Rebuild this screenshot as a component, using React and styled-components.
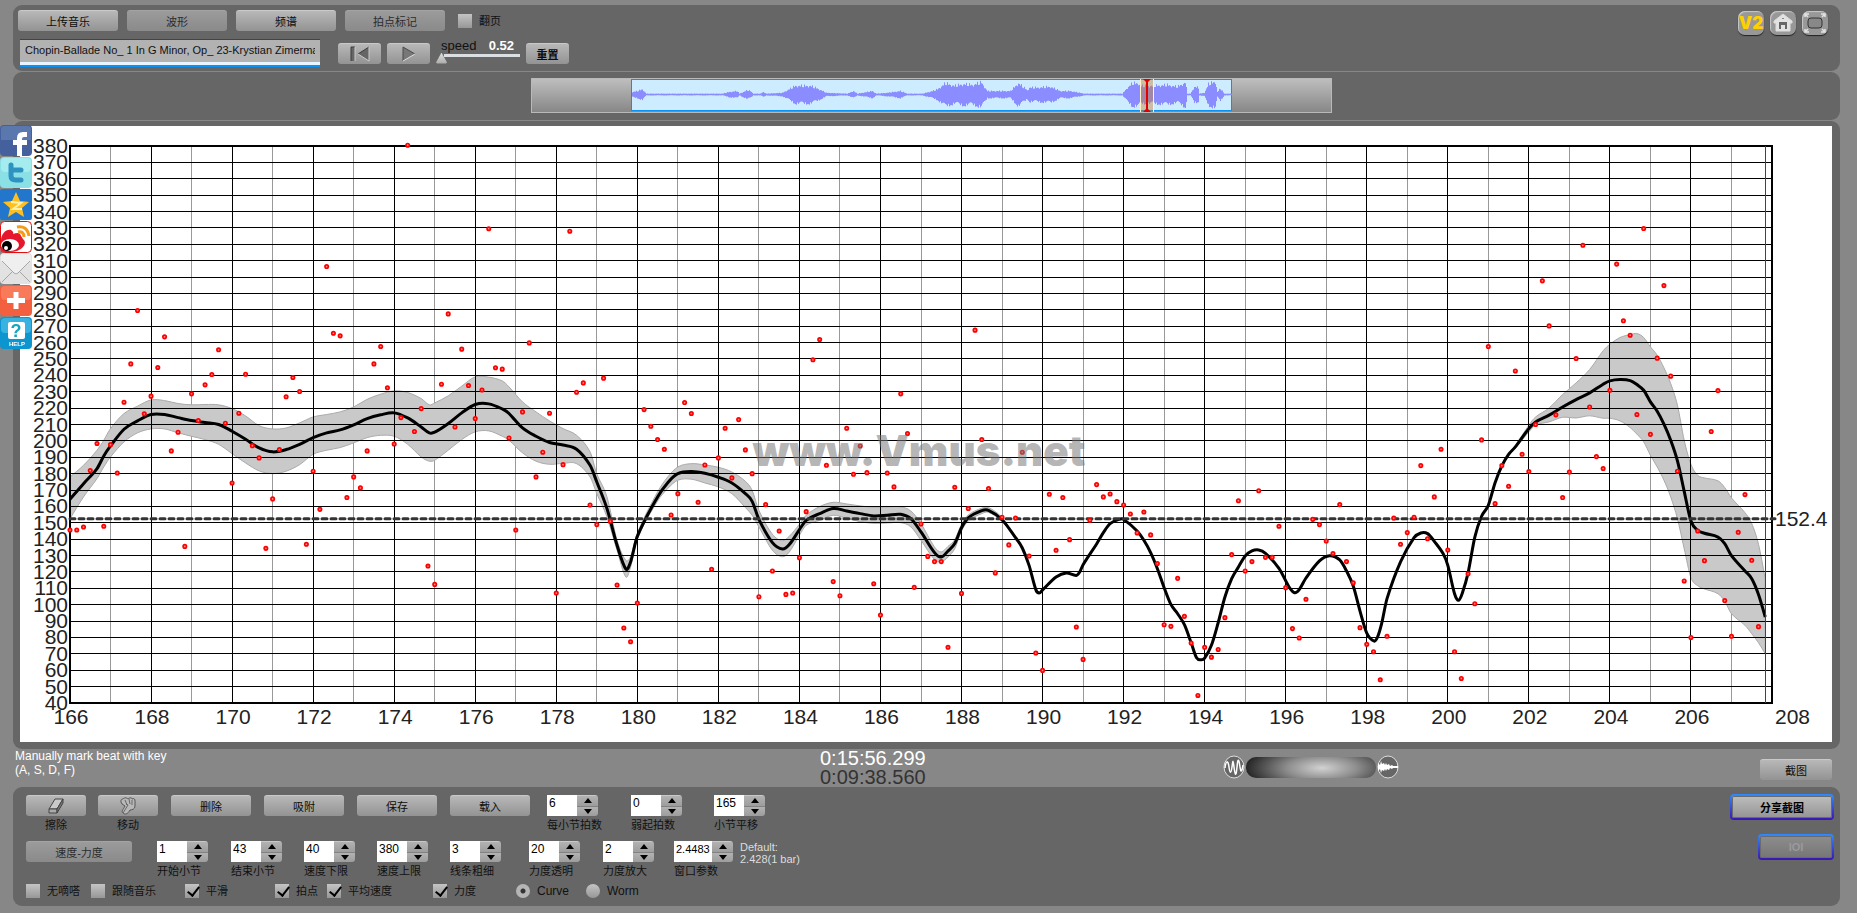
import React from "react";
import styled, { createGlobalStyle } from "styled-components";

const GlobalStyle = createGlobalStyle`
  * {
    box-sizing: border-box;
  }

  body {
    margin: 0;
    background-color: #878787;
    font-family: "Liberation Sans", "Noto Sans CJK SC", sans-serif;
    font-size: 12px;
    color: #111;
  }
`;

const Page = styled.main`
  display: flex;
  flex-direction: column;
  min-height: 100vh;
  padding: 5px 17px 7px 13px;
`;

const Panel = styled.section`
  background-color: #666;
  border-radius: 9px;
  margin-bottom: 1px;
`;

const ToolbarPanel = styled(Panel)`
  display: flex;
  justify-content: space-between;
  height: 66px;
  padding: 5px 11px 4px 5px;
`;

const ToolbarRows = styled.div`
  display: flex;
  flex-direction: column;
  gap: 8px;
`;

const ToolbarRow = styled.div`
  display: flex;
  align-items: center;
  gap: ${(props) => props.$gap}px;
`;

const Button = styled.button`
  display: flex;
  align-items: center;
  justify-content: center;
  flex-shrink: 0;
  width: ${(props) => props.$width}px;
  height: 21px;
  padding: 0;
  border: none;
  border-top: 1px solid ${(props) => (props.$dim ? "#a3a3a3" : "#c9c9c9")};
  border-radius: 3px;
  background: ${(props) =>
    props.$dim
      ? "linear-gradient(#9b9b9b, #8a8a8a)"
      : "linear-gradient(#b8b8b8, #939393)"};
  color: ${(props) => (props.$dim ? "#2c2c2c" : "#0c0c0c")};
  font-family: inherit;
  font-size: 11px;
  font-weight: ${(props) => (props.$bold ? "bold" : "normal")};
  cursor: pointer;
`;

const FramedButton = styled(Button)`
  height: 26px;
  border: 2px solid transparent;
  border-radius: 4px;
  background: ${(props) =>
      props.$dim
        ? "linear-gradient(#8d8d8d, #767676)"
        : "linear-gradient(#bdbdbd, #949494)"}
      padding-box,
    linear-gradient(#2f8cff, #3c14b4) border-box;
  color: ${(props) => (props.$dim ? "#9a9a9a" : "#000")};
  box-shadow: inset 0 0 0 1px #6b6b6b;
`;

const CheckLabel = styled.label`
  display: flex;
  align-items: center;
  gap: 7px;
  width: ${(props) => (props.$width ? props.$width + "px" : "auto")};
  margin-left: ${(props) => props.$indent || 0}px;
  font-size: ${(props) => (props.$latin ? 12 : 11)}px;
  line-height: 14px;
  white-space: nowrap;
`;

const Checkbox = styled.input`
  appearance: none;
  position: relative;
  flex-shrink: 0;
  width: 14px;
  height: 14px;
  margin: 0;
  background: linear-gradient(#c4c4c4, #979797);

  &:checked::after {
    content: "";
    position: absolute;
    left: 5px;
    top: 0;
    width: 5px;
    height: 10px;
    border: solid #000;
    border-width: 0 2px 2px 0;
    transform: rotate(38deg);
  }
`;

const Radio = styled.input`
  appearance: none;
  flex-shrink: 0;
  width: 14px;
  height: 14px;
  margin: 0;
  border-radius: 50%;
  background: linear-gradient(#c4c4c4, #979797);

  &:checked {
    background: radial-gradient(#333 0 2px, #b5b5b5 3px);
  }
`;

const FileName = styled.input`
  width: 300px;
  height: 28px;
  margin: 0 12px 0 2px;
  padding: 0 5px 6px;
  border: none;
  border-top: 1px solid #444;
  border-bottom: 2px solid #0a91f5;
  background: linear-gradient(#b2b2b2 0 22px, #e8f5ff 22px);
  color: #111;
  font-family: inherit;
  font-size: 11px;
`;

const Speed = styled.div`
  display: flex;
  flex-direction: column;
  justify-content: flex-start;
  width: 86px;
  height: 28px;
  margin: 0 -2px 0 0;
`;

const SpeedLabel = styled.label`
  display: flex;
  justify-content: space-between;
  padding: 0 8px 0 5px;
  font-size: 13px;
  line-height: 13px;

  output {
    color: #fff;
    font-weight: bold;
  }
`;

const SpeedSlider = styled.input`
  appearance: none;
  width: 84px;
  height: 12px;
  margin: 0;
  background: linear-gradient(#d9dfe2, #d9dfe2) 8px 2px / 76px 3px no-repeat;

  &::-webkit-slider-thumb {
    appearance: none;
    width: 11px;
    height: 11px;
    background: linear-gradient(#ddd, #aaa);
    clip-path: polygon(50% 0, 100% 90%, 90% 100%, 10% 100%, 0 90%);
  }
`;

const CornerLinks = styled.nav`
  display: flex;
  gap: 6px;
  padding: 1px 1px 0 0;
`;

const CornerLink = styled.a`
  display: flex;
  align-items: center;
  justify-content: center;
  width: 26px;
  height: 24px;
  border-radius: 7px;
  background-color: #989898;
  box-shadow: inset 1px 1px 1px #c8c8c8, 0 1px 1px #222;
  color: #ffd000;
  font-family: Inter, sans-serif;
  font-size: 17px;
  font-weight: 900;
  text-decoration: none;
`;

const OverviewPanel = styled(Panel)`
  display: flex;
  justify-content: center;
  height: 48px;
  padding: 6px 0 7px 10px;
`;

const Overview = styled.div`
  display: flex;
  justify-content: center;
  width: 801px;
  height: 35px;
  border: 1px solid #b9b9b9;
  background: linear-gradient(#bebebe, #878787);
`;

const ChartPanel = styled(Panel)`
  margin-bottom: 0;
  padding: 5px 8px 7px 7px;
`;

const ChartSvg = styled.svg`
  display: block;
  width: 100%;
  background-color: #fff;
  font-family: "Liberation Sans", sans-serif;
  font-size: 21px;
`;

const StatusBar = styled.div`
  display: grid;
  grid-template-columns: 805px 403px 1fr auto;
  height: 38px;
  padding: 0 8px 0 2px;
  color: #fff;
`;

const Hint = styled.p`
  margin: 0;
  font-size: 12px;
  line-height: 14px;
`;

const Times = styled.div`
  display: flex;
  flex-direction: column;
  font-size: 20px;
  line-height: 19px;

  time:last-child {
    color: #333;
  }
`;

const Zoomer = styled.div`
  display: flex;
  align-items: center;
  height: 36px;
  gap: 1px;
`;

const ZoomTrack = styled.input`
  appearance: none;
  width: 130px;
  height: 21px;
  margin: 0;
  border-radius: 10px;
  background: radial-gradient(
    ellipse 78px 26px at 76px 11px,
    #d2d2d2,
    #8d8d8d 45%,
    #222
  );

  &::-webkit-slider-thumb {
    appearance: none;
    width: 1px;
  }
`;

const StatusAction = styled.div`
  padding-top: 10px;
`;

const ControlsPanel = styled(Panel)`
  display: flex;
  justify-content: space-between;
  height: 119px;
  margin: 0;
  padding: 7px 6px 0 13px;
`;

const ControlRows = styled.div`
  display: grid;
  grid-template-rows: 42px 39px 14px;
  gap: 4px;
  padding-top: 1px;
`;

const ControlRow = styled.div`
  display: flex;
  align-items: flex-start;
`;

const Tool = styled.label`
  display: flex;
  flex-direction: column;
  align-items: center;
  width: 60px;
  margin-right: 12px;
  font-size: 11px;
  line-height: 18px;
`;

const ActionGroup = styled.div`
  display: flex;
  gap: 13px;
  margin-left: 1px;
  margin-right: 17px;
`;

const Field = styled.div`
  flex-shrink: 0;
  width: ${(props) => props.$width}px;
`;

const FieldLabel = styled.label`
  display: block;
  font-size: 11px;
  line-height: 18px;
  white-space: nowrap;
`;

const Spinner = styled.div`
  display: flex;
`;

const SpinnerInput = styled.input`
  width: ${(props) => (props.$wide ? 38 : 30)}px;
  height: 21px;
  padding: 0 0 5px 2px;
  border: none;
  background-color: #fff;
  font-family: inherit;
  font-size: ${(props) => (props.$wide ? 11 : 12)}px;
`;

const SpinnerButtons = styled.div`
  display: flex;
  flex-direction: column;
  width: 21px;
  height: 21px;
  border-radius: 0 3px 3px 0;
  overflow: hidden;
`;

const SpinnerButton = styled.button`
  display: flex;
  align-items: center;
  justify-content: center;
  flex: 1;
  padding: 0;
  border: none;
  border-top: 1px solid #828282;
  background: linear-gradient(#b2b2b2, #9d9d9d);

  &:first-child {
    border-top-color: #c9c9c9;
  }
`;

const DefaultNote = styled.p`
  margin: 0;
  color: #ddd;
  font-size: 11px;
  line-height: 12px;
`;

const SideActions = styled.div`
  display: flex;
  flex-direction: column;
  align-items: flex-end;
  gap: 14px;
`;

const ShareBar = styled.nav`
  position: fixed;
  left: 0;
  top: 125px;
  display: flex;
  flex-direction: column;
`;

const ShareLink = styled.a`
  display: block;
  width: 32px;
  height: 32px;

  svg {
    display: block;
  }
`;

const START_BAR = 166;
const END_BAR = 208;
const MIN_TEMPO = 40;
const MAX_TEMPO = 380;
const BEATS = 6;
const AVERAGE = 152.4;
const PLOT = { left: 50, right: 1752, top: 20, bottom: 577 };

// one tempo for each beat, six beats to the bar
const beatTempos = [
  145.6, 145.6, 147.4, 181.9, 198.4, 147.9, 197.7, 180.4, 223.6, 247, 279.6,
  216.5, 227.3, 244.8, 263.5, 193.9, 205.3, 135.6, 228.7, 212.4, 234.2, 240.5,
  255.6, 210.8, 174.3, 216.9, 240.7, 197.1, 189.6, 134.4, 164.6, 194.7, 226.9,
  238.7, 230.1, 136.9, 181.5, 158.2, 306.4, 265.7, 264.1, 165.4, 178, 171.3,
  193.9, 247, 257.6, 232.4, 198.1, 214.2, 380.5, 205.7, 219.7, 123.6, 112.4,
  234.6, 277.5, 208.5, 256, 233.8, 213.6, 231.1, 329.5, 244.6, 243.8, 201.8,
  145.6, 217.7, 259.8, 178, 193.1, 216.9, 107.1, 185.5, 328, 229.7, 235.4,
  160.9, 148.9, 238.3, 150.9, 112, 85.8, 77.4, 101, 219.1, 208.9, 200.8, 194.9,
  154.8, 167.8, 223.4, 216.7, 162.5, 185.3, 121.6, 189.6, 207.7, 177.4, 213,
  194.5, 180, 104.9, 161.1, 120.6, 145, 106.3, 107.1, 128.7, 156.8, 249.5,
  261.9, 185.1, 114.1, 105.5, 207.7, 179.6, 196.9, 180.6, 112.8, 93.7, 180.4,
  171.9, 228.7, 204.5, 110.6, 149.3, 129.5, 126.3, 126.3, 74, 171.7, 106.9,
  158.7, 267.6, 200.8, 170.9, 119.4, 153.4, 136.5, 152.9, 193.1, 129.7, 70.5,
  59.9, 167.4, 133.2, 165.4, 139.7, 86.4, 66.6, 151.5, 173.3, 165.8, 167.6,
  162.9, 160.9, 155.4, 143.8, 156.6, 142.6, 125.1, 87.8, 86.8, 116.1, 92.9,
  76.6, 44.6, 74, 68, 72.7, 92.1, 130.6, 163.5, 120.6, 126.3, 169.6, 128.9,
  128.9, 147.9, 110.4, 85.4, 79.7, 103.3, 152.1, 148.9, 138.9, 131.2, 161.1,
  126.3, 113.4, 86, 75.8, 71.3, 54.2, 80.7, 152.9, 136.9, 144, 153.4, 184.9,
  140.3, 165.8, 194.9, 133.4, 71.3, 55, 118.9, 100.6, 200.6, 257.6, 161.7,
  184.9, 172.3, 242.7, 191.8, 181.3, 210, 297.7, 270.2, 215.9, 165.4, 181,
  250.3, 319.4, 220.7, 190.4, 183.1, 230.9, 307.9, 273.3, 264.5, 216.1, 329.6,
  204, 250.5, 294.8, 239.5, 181.5, 114.5, 80, 145, 126.9, 205.7, 230.7, 102.5,
  80.7, 144.2, 167.2, 127.1, 86.6,
];

// [beat, tempo, top of band, bottom of band]
const curve = [
  [0, 164.4, 178, 152.5], [2, 173.9, 185.1, 165.8], [4, 183.1, 194.3, 177],
  [5, 190.8, 200.4, 184.1], [6, 196.9, 207.5, 190.2], [8, 207.1, 216.7, 199.4],
  [10, 212.2, 221.2, 204.9], [12, 216.1, 225, 207.3], [14, 216.1, 224.6, 207.3],
  [16, 214.2, 222.8, 204.9], [18, 212.4, 222, 202.8], [20, 211.2, 222.2, 200.8],
  [22, 210, 222, 197.9], [24, 205.9, 219.7, 192.2], [26, 201, 215.2, 186.5],
  [28, 195.7, 209.3, 181.7], [30, 193.3, 207.3, 180], [32, 194.7, 207.9, 181.5],
  [34, 197.9, 211, 185.5], [36, 202, 214.6, 191.8], [38, 204.9, 216.1, 194.3],
  [40, 206.7, 217.7, 195.9], [42, 209.8, 220.7, 198.8], [44, 213.6, 225.4, 202],
  [46, 215.9, 228.5, 203.4], [48, 217.1, 230.5, 202.8], [50, 214, 229.5, 197.9],
  [52, 208.5, 225.8, 190.2], [53.2, 204.9, 222, 187.6], [54, 205.3, 223.2, 188.2],
  [56, 210.6, 227.5, 194.3], [58, 217.1, 233.4, 200.8], [60, 222.2, 239.1, 205.5],
  [62, 222.6, 238.9, 206.1], [64, 219.5, 236.6, 202.8], [65, 216.7, 233, 200.4],
  [67, 207.9, 223.8, 192.7], [69, 202.8, 217.7, 187.6], [71, 199, 212.2, 185.7],
  [73, 197.5, 207.5, 186.3], [75, 194.9, 203.4, 186.1], [77, 185.1, 193.3, 178],
  [78, 174.9, 180, 167.8], [79.5, 158.7, 165.8, 153.6], [81, 136.3, 139.3, 133.2],
  [82.3, 121.8, 127.1, 116.9], [83, 126.1, 129.5, 123], [84, 141.7, 143.8, 140.1],
  [87, 165.8, 168.8, 163.3], [88.5, 174.5, 178, 170.9], [90, 180, 184.1, 176],
  [92, 181.3, 186.1, 176.6], [94, 180.2, 185.3, 174.3], [96, 177.8, 183.9, 171.9],
  [98, 174.3, 181, 167.8], [100, 167.8, 175.3, 159.3], [101, 163.1, 169.8, 154.6],
  [102, 152.1, 157.6, 147.5], [104, 137.9, 143, 133.2], [105.5, 134, 139.1, 129.3],
  [106.5, 136.7, 141.8, 132.2], [108, 145.8, 149.1, 142.4], [109, 151.5, 154.6, 148.5],
  [111, 155.6, 159.9, 151.5], [113, 158.7, 162.5, 154.6], [115, 157.2, 161.5, 152.7],
  [117, 155.6, 160.3, 150.7], [119, 154.2, 159.5, 149.7], [121, 154.6, 159.7, 149.9],
  [123, 155.2, 159.7, 150.1], [124.5, 152.5, 157.2, 147.5], [126, 144.4, 149.5, 139.3],
  [128, 131.8, 135.2, 127.5], [129, 129.1, 132.2, 126.1], [130, 132.8, 135.6, 129.1],
  [131, 137.3, 139.7, 134.2], [132, 147, 149.1, 145], [133, 153, 154.8, 151.1],
  [135, 157.4, 158.9, 155.6], [136, 157.6, 159.3, 156.4], [138, 151.9, 153.2, 150.7],
  [140, 140.9], [141, 134.6], [142, 124], [143, 109.2], [143.5, 107.1],
  [144, 109], [146, 116.9], [147.5, 119.4], [149, 117.9], [149.5, 120],
  [150, 124.4], [152, 137.1], [153, 144], [154, 149.5], [155.5, 152.3],
  [156, 152.1], [158, 145], [159, 139.3], [160, 131.8], [161, 122],
  [162, 110.4], [163, 100.2], [164, 94.5], [165, 87.8], [166, 76.8],
  [166.8, 67.6], [167.5, 66.4], [168, 67.4], [169, 75.2], [170, 89],
  [171, 104.7], [172, 115.9], [173, 123], [174, 129.7], [175, 132.8],
  [176, 133.4], [177, 131.4], [179, 122.2], [180.5, 110.8], [181.3, 107.3],
  [182, 109.2], [183, 116.3], [185, 126.7], [186.5, 129.9], [188, 127.3],
  [189, 120.6], [190, 111.4], [191, 96.1], [192, 82.7], [193.1, 77.8],
  [193.6, 80.3], [194.2, 88.4], [195, 103.7], [197, 126.1], [199, 140.9],
  [200, 143.8], [201, 143.4], [202, 138.7], [203.3, 131.2], [204, 124],
  [205, 106.7], [205.6, 102.7], [206.2, 107.7], [207, 119.4], [208, 141.3],
  [209, 154], [210, 160.7], [211, 174.5], [212, 184.7], [213, 191.8],
  [214, 196.3, 197.1, 195.5], [216, 207.5, 209.6, 205.5], [217, 211.6, 214.6, 209.6],
  [219, 215.7, 220.1, 211.6], [221, 220.7, 228.3, 214.4], [223, 225.2, 235.4, 214],
  [225, 229.3, 243.6, 215.3], [227, 234.6, 255, 213.8], [228, 236.6, 259, 213.8],
  [229.5, 237.4, 263.1, 212.2], [231, 236.8, 264.9, 208.1], [232, 234.4, 265.5, 204.1],
  [233, 230.9, 263.1, 199.4], [234, 223.8, 257.4, 191.2], [235, 218.1, 252.3, 184.1],
  [236, 210.2, 244.6, 176], [237, 200.4, 235, 165.8], [238, 187.8, 221.8, 152.5],
  [239, 169.2, 200.4, 134.2], [240, 151.1, 185.7, 116.5], [241, 145.4, 179, 111.6],
  [242, 143.6, 177.4, 109.6], [244, 141.3, 175.6, 106.7], [245, 137.3, 171.5, 102.1],
  [246, 129.9, 165.2, 94.5], [248, 120.6, 156.2, 87.4], [249, 115.9, 149.5, 82.3],
  [250, 106.3, 136.9, 76.8], [251, 92.5, 115.9, 70.1],
];

// [x, half height] of the recording's envelope
const envelope = [
  [0, 3], [5, 4], [10, 6], [14, 1], [90, 1], [97, 3], [105, 4], [107, 1],
  [115, 5], [118, 4], [121, 1], [128, 1], [131, 3], [134, 1], [150, 2],
  [155, 5], [163, 10], [170, 10], [178, 10], [185, 7], [194, 2], [215, 1],
  [221, 4], [225, 1], [240, 4], [244, 1], [255, 2], [268, 4], [275, 1],
  [290, 1], [300, 4], [305, 6], [313, 13], [322, 10], [331, 12], [340, 11],
  [349, 14], [355, 4], [362, 4], [378, 4], [386, 13], [395, 5], [397, 8],
  [405, 8], [418, 9], [428, 4], [438, 4], [452, 1], [490, 1], [495, 8],
  [500, 13], [506, 13], [508, 10], [520, 10], [535, 11], [545, 9], [553, 14],
  [555, 1], [558, 1], [562, 9], [566, 8], [567, 1], [572, 2], [576, 12],
  [583, 15], [585, 3], [588, 7], [592, 1], [600, 1],
];

const beatX = (beat) =>
  PLOT.left +
  ((PLOT.right - PLOT.left) * beat) / (BEATS * (END_BAR - START_BAR));

const tempoY = (tempo) =>
  PLOT.bottom -
  ((PLOT.bottom - PLOT.top) * (tempo - MIN_TEMPO)) / (MAX_TEMPO - MIN_TEMPO);

const smoothPath = (points) => {
  const slopes = points.map((point, i) => {
    const [x0, y0] = points[Math.max(i - 1, 0)];
    const [x2, y2] = points[Math.min(i + 1, points.length - 1)];
    return (y2 - y0) / (x2 - x0);
  });
  return points
    .slice(1)
    .map(([x, y], i) => {
      const [px, py] = points[i];
      const third = (x - px) / 3;
      const c1y = py + slopes[i] * third;
      const c2y = y - slopes[i + 1] * third;
      return `C${px + third} ${c1y} ${x - third} ${c2y} ${x} ${y}`;
    })
    .join("");
};

const linePoints = curve.map(([beat, tempo]) => [beatX(beat), tempoY(tempo)]);
const topPoints = curve.map(([beat, tempo, top]) => [
  beatX(beat),
  tempoY(top || tempo),
]);
const bottomPoints = curve
  .map(([beat, tempo, , bottom]) => [beatX(beat), tempoY(bottom || tempo)])
  .reverse();

const linePath = `M${linePoints[0].join(" ")}${smoothPath(linePoints)}`;
const bandPath =
  `M${topPoints[0].join(" ")}${smoothPath(topPoints)}` +
  `L${bottomPoints[0].join(" ")}${smoothPath(bottomPoints)}Z`;

const wavePath = () => {
  let path = "M0 15.5H600";
  for (let x = 0; x < 600; x++) {
    const next = envelope.findIndex((point) => point[0] > x);
    const [x0, h0] = envelope[next - 1];
    const [x1, h1] = envelope[next];
    const height = h0 + ((h1 - h0) * (x - x0)) / (x1 - x0);
    const up = height * (0.7 + ((x * x * 37) % 11) / 30);
    const down = height * (0.7 + ((x * x * 53) % 13) / 38);
    path += `M${x + 0.5} ${15.5 - up}V${15.5 + down}`;
  }
  return path;
};

const range = (from, to, step) => {
  const list = [];
  for (let value = from; value <= to; value += step) {
    list.push(value);
  }
  return list;
};

function TempoChart() {
  return (
    <ChartSvg viewBox="0 0 1812 616" role="img" aria-label="速度-力度">
      {range(START_BAR + 1, END_BAR - 1, 2).map((bar) => (
        <path
          key={bar}
          d={`M${Math.floor(beatX((bar - START_BAR) * BEATS)) + 0.5} ${PLOT.top}V${PLOT.bottom}`}
          stroke="#999"
        />
      ))}
      <path d={bandPath} fill="#c9c9c9" stroke="#aaa" />
      {range(MIN_TEMPO, MAX_TEMPO, 10).map((tempo) => (
        <g key={tempo}>
          <path
            d={`M${PLOT.left} ${Math.floor(tempoY(tempo)) + 0.5}H${PLOT.right}`}
            stroke="#000"
          />
          <text x="48" y={tempoY(tempo) + 7} textAnchor="end" fill="#222">
            {tempo}
          </text>
        </g>
      ))}
      {range(START_BAR, END_BAR, 2).map((bar) => {
        const x = beatX((bar - START_BAR) * BEATS);
        return (
          <g key={bar}>
            <path
              d={`M${Math.floor(x) + 0.5} ${PLOT.top}V${PLOT.bottom}`}
              stroke="#000"
            />
            <text
              x={bar === END_BAR ? x + 3 : x + 1}
              y="598"
              textAnchor={bar === END_BAR ? "start" : "middle"}
              fill="#222"
            >
              {bar}
            </text>
          </g>
        );
      })}
      <rect
        x={PLOT.left}
        y={PLOT.top}
        width={PLOT.right - PLOT.left}
        height={PLOT.bottom - PLOT.top}
        fill="none"
        stroke="#000"
        strokeWidth="2"
      />
      <path d={linePath} fill="none" stroke="#000" strokeWidth="3" />
      <path
        d={`M${PLOT.left} ${tempoY(AVERAGE)}H${PLOT.right + 3}`}
        stroke="#333"
        strokeWidth="3"
        strokeDasharray="5 4"
        strokeLinecap="round"
      />
      <text x={PLOT.right + 3} y={tempoY(AVERAGE) + 7} fill="#222">
        {AVERAGE}
      </text>
      <path
        d={`M${Math.floor(beatX(251)) + 0.5} ${PLOT.top}V${PLOT.bottom}`}
        stroke="#e00000"
      />
      {beatTempos.map((tempo, beat) => (
        <circle
          key={beat}
          cx={beatX(beat)}
          cy={tempoY(tempo)}
          r="1.7"
          fill="#ff8a8a"
          stroke="#f00"
          strokeWidth="1.7"
        />
      ))}
      <text
        x="899"
        y="340"
        textAnchor="middle"
        fill="#777"
        fillOpacity="0.55"
        fontFamily="Inter"
        fontWeight="900"
        fontSize="42"
      >
        www.Vmus.net
      </text>
    </ChartSvg>
  );
}

function Waveform() {
  return (
    <svg width="601" height="33" viewBox="-1 0 601 33">
      <rect
        x="-0.5"
        y="0.5"
        width="600"
        height="31"
        fill="#ceecff"
        stroke="#0a91f5"
      />
      <path d={wavePath()} stroke="#8a8cff" />
      <path d="M509 0H521V33H509Z" fill="#c97a1c" fillOpacity="0.4" />
      <path d="M508.5 0V33M521.5 0V33" stroke="#fff3c8" />
      <path d="M515 0V33" stroke="#e00000" strokeWidth="2" />
      <path d="M511 0H519L515 4ZM511 33H519L515 29Z" fill="#e00000" />
    </svg>
  );
}

function CheckField({ label, checked, width, indent }) {
  return (
    <CheckLabel $width={width} $indent={indent}>
      <Checkbox type="checkbox" defaultChecked={checked} />
      {label}
    </CheckLabel>
  );
}

class NumberField extends React.Component {
  state = {
    value: this.props.value,
  };

  step = (amount) => {
    this.setState({ value: String(Number(this.state.value) + amount) });
  };

  render() {
    const { id, label, width, wide } = this.props;
    return (
      <Field $width={width}>
        <Spinner>
          <SpinnerInput
            id={id}
            $wide={wide}
            value={this.state.value}
            onChange={(e) => this.setState({ value: e.target.value })}
          />
          <SpinnerButtons>
            <SpinnerButton aria-label={label + " +"} onClick={() => this.step(1)}>
              <svg width="8" height="5">
                <path d="M0 5L4 0L8 5Z" />
              </svg>
            </SpinnerButton>
            <SpinnerButton aria-label={label + " -"} onClick={() => this.step(-1)}>
              <svg width="8" height="5">
                <path d="M0 0L4 5L8 0Z" />
              </svg>
            </SpinnerButton>
          </SpinnerButtons>
        </Spinner>
        <FieldLabel htmlFor={id}>{label}</FieldLabel>
      </Field>
    );
  }
}

function Toolbar() {
  return (
    <ToolbarPanel>
      <ToolbarRows>
        <ToolbarRow $gap={9}>
          <Button $width={100}>上传音乐</Button>
          <Button $width={100} $dim>
            波形
          </Button>
          <Button $width={100}>频谱</Button>
          <Button $width={100} $dim>
            拍点标记
          </Button>
          <CheckField label="翻页" indent={4} />
        </ToolbarRow>
        <ToolbarRow $gap={6}>
          <FileName
            aria-label="音乐"
            defaultValue="Chopin-Ballade No_ 1 In G Minor, Op_ 23-Krystian Zimerman"
          />
          <Button $width={43} aria-label="Rewind">
            <svg width="22" height="16">
              <path d="M2 1H6V15H2Z" fill="#666" />
              <path d="M20 1V15L9 8Z" fill="#666" />
              <path d="M2 15V1H6M20 1L9 8" fill="none" stroke="#3c3c3c" />
              <path d="M6 1V15M9 8L20 15V1" fill="none" stroke="#ccc" />
            </svg>
          </Button>
          <Button $width={43} aria-label="Play">
            <svg width="16" height="16">
              <path d="M2 1V15L14 8Z" fill="#777" />
              <path d="M14 8L2 1V15" fill="none" stroke="#4a4a4a" />
              <path d="M2 15L14 8" stroke="#ddd" />
            </svg>
          </Button>
          <Speed>
            <SpeedLabel htmlFor="speed">
              speed <output>0.52</output>
            </SpeedLabel>
            <SpeedSlider
              id="speed"
              type="range"
              min="0.52"
              max="2"
              step="0.01"
              defaultValue="0.52"
            />
          </Speed>
          <Button $width={43} $bold>
            重置
          </Button>
        </ToolbarRow>
      </ToolbarRows>
      <CornerLinks>
        <CornerLink href="#v2">V2</CornerLink>
        <CornerLink href="#home" aria-label="Home">
          <svg width="20" height="20">
            <path
              d="M10 1L19 8V10H17V18H3V10H1V8Z"
              fill="#e2e2e2"
              stroke="#ddd"
              strokeLinejoin="round"
            />
            <path d="M6 16V9H14V16H12V12H8V16Z" fill="#666" />
            <path d="M9 5H11V6H9Z" fill="#888" />
          </svg>
        </CornerLink>
        <CornerLink href="#fullscreen" aria-label="Fullscreen">
          <svg width="22" height="20">
            <rect x="4" y="5" width="14" height="10" rx="3" fill="#888" stroke="#333" />
            <path
              d="M1 4V1H5M17 1H21V4M21 16V19H17M5 19H1V16M1 1L4 4M21 1L18 4M21 19L18 16M1 19L4 16"
              fill="none"
              stroke="#e2e2e2"
              strokeWidth="1.5"
            />
          </svg>
        </CornerLink>
      </CornerLinks>
    </ToolbarPanel>
  );
}

function Status() {
  return (
    <StatusBar>
      <Hint>
        Manually mark beat with key
        <br />
        (A, S, D, F)
      </Hint>
      <Times>
        <time>0:15:56.299</time>
        <time>0:09:38.560</time>
      </Times>
      <Zoomer>
        <svg width="22" height="24">
          <ellipse cx="11" cy="12" rx="10" ry="11" fill="#666" stroke="#ddd" />
          <path
            d="M2 13C3 5 5 5 6 12S8 19 9 12S10 4 11 12S13 23 14 12S16 5 17 12S19 16 20 10"
            fill="none"
            stroke="#fff"
            strokeWidth="1.5"
          />
        </svg>
        <ZoomTrack type="range" aria-label="Zoom" />
        <svg width="22" height="24">
          <ellipse cx="11" cy="12" rx="10" ry="11" fill="#666" stroke="#ddd" />
          <path
            d="M1 8L3 10L4 6L5 9L7 8L8 10L9 8L10 10L12 9L13 11L15 10L16 11H21V13H16L15 14L13 13L12 15L10 14L9 16L8 14L7 16L5 15L4 18L3 14L1 16Z"
            fill="#fff"
          />
        </svg>
      </Zoomer>
      <StatusAction>
        <Button $width={72}>截图</Button>
      </StatusAction>
    </StatusBar>
  );
}

function Controls() {
  return (
    <ControlsPanel>
      <ControlRows>
        <ControlRow>
          <Tool>
            <Button $width={60}>
              <svg width="18" height="16">
                <path d="M2 11L8 1H16L10 11Z" fill="#c9c9c9" stroke="#444" />
                <path d="M2 11H10V15H2Z" fill="#aaa" stroke="#444" />
                <path d="M10 11L16 1V5L10 15Z" fill="#777" stroke="#444" />
              </svg>
            </Button>
            擦除
          </Tool>
          <Tool>
            <Button $width={60}>
              <svg width="18" height="18">
                <path
                  d="M4 16C2 14 4 13 6 9L3 7C1 4 2 2 4 2C6 0 8 1 9 2C11 0 13 1 13 2C15 1 16 2 16 4V9C16 12 13 13 11 13C9 17 6 18 4 16Z"
                  fill="#b8b8b8"
                  stroke="#555"
                />
                <path
                  d="M6 3L8 8M10 2L11 7M13 3V8M4 16L9 8L7 7"
                  fill="none"
                  stroke="#666"
                />
              </svg>
            </Button>
            移动
          </Tool>
          <ActionGroup>
            <Button $width={80}>删除</Button>
            <Button $width={80}>吸附</Button>
            <Button $width={80}>保存</Button>
            <Button $width={80}>载入</Button>
          </ActionGroup>
          <NumberField id="beats" label="每小节拍数" value="6" width={84} />
          <NumberField id="upbeat" label="弱起拍数" value="0" width={83} />
          <NumberField id="offset" label="小节平移" value="165" width={60} />
        </ControlRow>
        <ControlRow>
          <Field $width={131}>
            <Button $width={106} $dim>
              速度-力度
            </Button>
          </Field>
          <NumberField id="first" label="开始小节" value="1" width={74} />
          <NumberField id="last" label="结束小节" value="43" width={73} />
          <NumberField id="low" label="速度下限" value="40" width={73} />
          <NumberField id="high" label="速度上限" value="380" width={73} />
          <NumberField id="line" label="线条粗细" value="3" width={79} />
          <NumberField id="alpha" label="力度透明" value="20" width={74} />
          <NumberField id="gain" label="力度放大" value="2" width={71} />
          <NumberField id="window" label="窗口参数" value="2.4483" width={66} wide />
          <DefaultNote>
            Default:
            <br />
            2.428(1 bar)
          </DefaultNote>
        </ControlRow>
        <ControlRow>
          <CheckField label="无嘀嗒" width={65} />
          <CheckField label="跟随音乐" width={94} />
          <CheckField label="平滑" width={90} checked />
          <CheckField label="拍点" width={52} checked />
          <CheckField label="平均速度" width={106} checked />
          <CheckField label="力度" width={83} checked />
          <CheckLabel $width={70} $latin>
            <Radio type="radio" name="shape" defaultChecked />
            Curve
          </CheckLabel>
          <CheckLabel $latin>
            <Radio type="radio" name="shape" />
            Worm
          </CheckLabel>
        </ControlRow>
      </ControlRows>
      <SideActions>
        <FramedButton $width={104} $bold>
          分享截图
        </FramedButton>
        <FramedButton $width={76} $bold $dim>
          IOI
        </FramedButton>
      </SideActions>
    </ControlsPanel>
  );
}

function Share() {
  return (
    <ShareBar>
      <ShareLink href="#facebook" aria-label="Facebook">
        <svg width="32" height="32">
          <rect width="32" height="31" rx="4" fill="#44619d" />
          <path d="M1 15H31V4Q31 1 28 1H4Q1 1 1 4Z" fill="#5b78ae" />
          <path
            d="M17 31V20H13V15H17V13Q17 7 23 7H27V12H24Q22 12 22 14V15H27V20H22V31Z"
            fill="#fff"
          />
        </svg>
      </ShareLink>
      <ShareLink href="#twitter" aria-label="Twitter">
        <svg width="32" height="32">
          <rect width="32" height="31" rx="4" fill="#8be0e6" />
          <rect x="1" y="1" width="30" height="14" rx="4" fill="#a5ecee" />
          <path
            d="M11 8V19Q11 23 16 23H21M11 13H21"
            fill="none"
            stroke="#2f93c2"
            strokeWidth="5"
            strokeLinecap="round"
          />
        </svg>
      </ShareLink>
      <ShareLink href="#qzone" aria-label="Qzone">
        <svg width="32" height="32">
          <rect width="32" height="31" rx="2" fill="#2277cc" />
          <path
            d="M16 3L20 12L29 13L22 19L24 28L16 23L8 28L10 19L3 13L12 12Z"
            fill="#ffbf1f"
          />
          <path d="M11 13L21 14L13 20H22" fill="none" stroke="#fff2a8" strokeWidth="2" />
        </svg>
      </ShareLink>
      <ShareLink href="#weibo" aria-label="Weibo">
        <svg width="32" height="32">
          <rect x="0.5" y="0.5" width="31" height="31" rx="4" fill="#fff" stroke="#d11" />
          <path
            d="M1 20C1 13 6 8 11 9Q14 11 13 13Q20 10 21 15L23 18Q27 21 23 26Q19 31 9 31H4Q1 31 1 28Z"
            fill="#e6162d"
          />
          <ellipse cx="10" cy="24" rx="9" ry="6" fill="#fff" />
          <circle cx="7" cy="25" r="5" fill="#000" />
          <circle cx="6" cy="27" r="2" fill="#fff" />
          <path
            d="M17 6Q27 4 29 15M18 11Q24 10 24 16"
            fill="none"
            stroke="#f79a17"
            strokeWidth="3"
          />
        </svg>
      </ShareLink>
      <ShareLink href="#mail" aria-label="Mail">
        <svg width="32" height="32">
          <rect width="32" height="31" rx="4" fill="#e2e2e2" />
          <path d="M1 8L16 22L31 8V4Q31 1 28 1H4Q1 1 1 4Z" fill="#efefef" />
          <path
            d="M2 8L14 20Q16 22 18 20L30 8M2 29L12 19M30 29L20 19"
            fill="none"
            stroke="#a5a5a5"
          />
        </svg>
      </ShareLink>
      <ShareLink href="#more" aria-label="More">
        <svg width="32" height="32">
          <rect width="32" height="31" rx="4" fill="#f2603f" />
          <rect x="1" y="1" width="30" height="14" rx="4" fill="#f9795b" />
          <path d="M16 7V24M7 15.5H25" stroke="#fff" strokeWidth="5" />
        </svg>
      </ShareLink>
      <ShareLink href="#help" aria-label="Help">
        <svg width="32" height="32">
          <rect width="32" height="32" rx="4" fill="#0d95cf" />
          <rect x="1" y="1" width="30" height="15" rx="4" fill="#38b2e0" />
          <rect x="8" y="5" width="17" height="17" rx="2" fill="#fff" />
          <text x="16" y="20" textAnchor="middle" fontSize="18" fontWeight="bold" fill="#14a5c0">
            ?
          </text>
          <text x="17" y="29" textAnchor="middle" fontSize="6" fontWeight="bold" fill="#fff">
            HELP
          </text>
        </svg>
      </ShareLink>
    </ShareBar>
  );
}

function App() {
  return (
    <>
      <GlobalStyle />
      <Page>
        <Toolbar />
        <OverviewPanel>
          <Overview>
            <Waveform />
          </Overview>
        </OverviewPanel>
        <ChartPanel>
          <TempoChart />
        </ChartPanel>
        <Status />
        <Controls />
      </Page>
      <Share />
    </>
  );
}

export default App;
